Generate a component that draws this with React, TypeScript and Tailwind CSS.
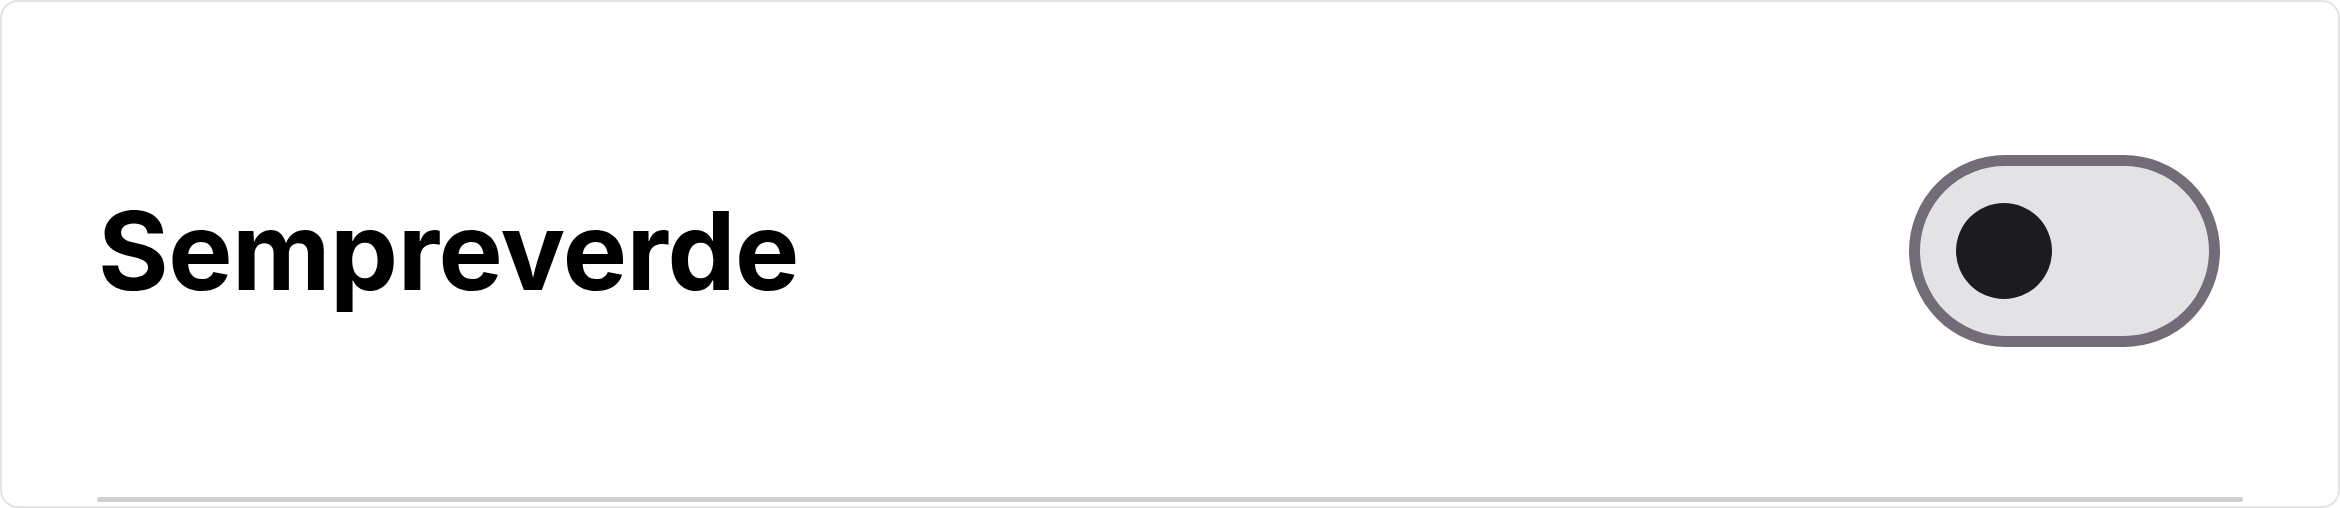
import React, { useState } from "react";

const Toggle = ({ on, onChange }: { on: boolean; onChange: (v: boolean) => void }) => {
  return (
    <div
      role="switch"
      aria-checked={on}
      onClick={() => onChange(!on)}
      className={`shrink-0 box-border flex items-center w-[311px] h-[192px] rounded-full border-[11px] border-[#716c77] bg-[#e3e3e6] px-[36px] cursor-pointer ${
        on ? "justify-end" : "justify-start"
      }`}
    >
      <span className="block shrink-0 w-[96px] h-[96px] rounded-full bg-[#1c1c1e]" />
    </div>
  );
};

const App = () => {
  const [enabled, setEnabled] = useState(false);

  return (
    <div className="w-[2340px] h-[508px] bg-white">
      <div className="w-full h-full flex flex-col border-2 border-[#e3e3e3] rounded-[18px] bg-white overflow-hidden">
        {/* setting row */}
        <div className="flex-1 flex items-center justify-between pl-[96px] pr-[118px] pt-[3px]">
          <span className="font-['Inter',sans-serif] text-[108px] leading-none font-bold tracking-[-0.5px] text-black">
            Sempreverde
          </span>
          <Toggle on={enabled} onChange={setEnabled} />
        </div>
        <div className="mx-[95px] h-[5px] bg-[#cfcfcf] rounded-full mb-[4px]" />
      </div>
    </div>
  );
};

export default App;
